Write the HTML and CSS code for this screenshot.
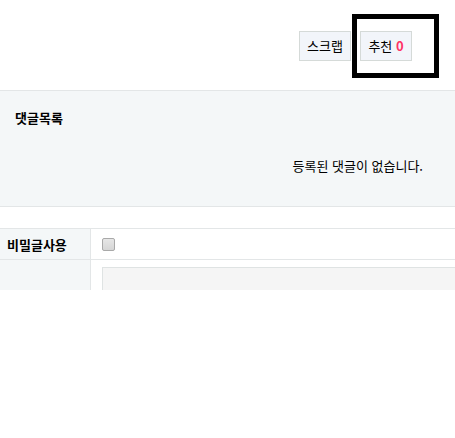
FILE: index.html
```html
<!DOCTYPE html>
<html lang="ko">
<head>
<meta charset="utf-8">
<link rel="stylesheet" href="styles.css">
</head>
<body>
<div class="page">
  <div class="actions">
    <button class="btn">스크랩</button>
    <button class="btn">추천 <strong class="count">0</strong></button>
    <div class="highlight"></div>
  </div>
  <section class="comments">
    <h2 class="comments-title">댓글목록</h2>
    <p class="comments-empty">등록된 댓글이 없습니다.</p>
  </section>
  <table class="form">
    <tr>
      <th>비밀글사용</th>
      <td><span class="check"></span></td>
    </tr>
    <tr>
      <th></th>
      <td><div class="textarea"></div></td>
    </tr>
  </table>
</div>
</body>
</html>
```

FILE: styles.css
```css
html, body {
  margin: 0;
  padding: 0;
  background: #fff;
}
body {
  font-family: "Noto Sans CJK KR", "Noto Sans", sans-serif;
  font-size: 13px;
  color: #000;
}
.page {
  height: 290px;
  overflow: hidden;
}
.actions {
  position: relative;
  height: 90px;
  display: flex;
  justify-content: flex-end;
  align-items: flex-start;
  gap: 9px;
  padding: 31px 43px 0 0;
  box-sizing: border-box;
}
.btn {
  width: 52px;
  height: 30px;
  padding: 0;
  border: 1px solid #d5dad8;
  background: #f2f5fa;
  font-family: inherit;
  font-size: 13px;
  color: #000;
  line-height: 28px;
  cursor: pointer;
}
.count {
  color: #ff3366;
  font-weight: bold;
}
.highlight {
  position: absolute;
  left: 352px;
  top: 14px;
  width: 87px;
  height: 64px;
  border: 5px solid #000;
  box-sizing: border-box;
}
.comments {
  height: 117px;
  box-sizing: border-box;
  background: #f4f7f8;
  border-top: 1px solid #e3e6e7;
  border-bottom: 1px solid #e3e6e7;
  padding: 18px 32px 0 15px;
}
.comments-title {
  margin: 0;
  font-size: 13px;
  font-weight: bold;
  line-height: 18px;
}
.comments-empty {
  margin: 30px 0 0;
  text-align: right;
  line-height: 18px;
}
.form {
  margin-top: 21px;
  width: 100%;
  border-collapse: collapse;
  border-top: 1px solid #e3e6e7;
}
.form th {
  width: 90px;
  box-sizing: border-box;
  background: #f4f7f8;
  border-right: 1px solid #e3e6e7;
  border-bottom: 1px solid #e3e6e7;
  text-align: left;
  padding: 0 0 0 7px;
  height: 30px;
  font-size: 13px;
  font-weight: bold;
}
.form td {
  border-bottom: 1px solid #e3e6e7;
  padding: 0 0 0 11px;
  height: 30px;
}
.check {
  display: block;
  width: 11px;
  height: 11px;
  border: 1px solid #a9a9a9;
  border-radius: 2px;
  background: linear-gradient(#e6e6e6, #d6d6d6);
  margin-top: 1px;
}
.form tr:nth-child(2) td {
  padding-top: 7px;
  vertical-align: top;
}
.textarea {
  height: 100px;
  margin-right: -20px;
  background: #f5f5f5;
  border: 1px solid #dfe3e3;
}
```
